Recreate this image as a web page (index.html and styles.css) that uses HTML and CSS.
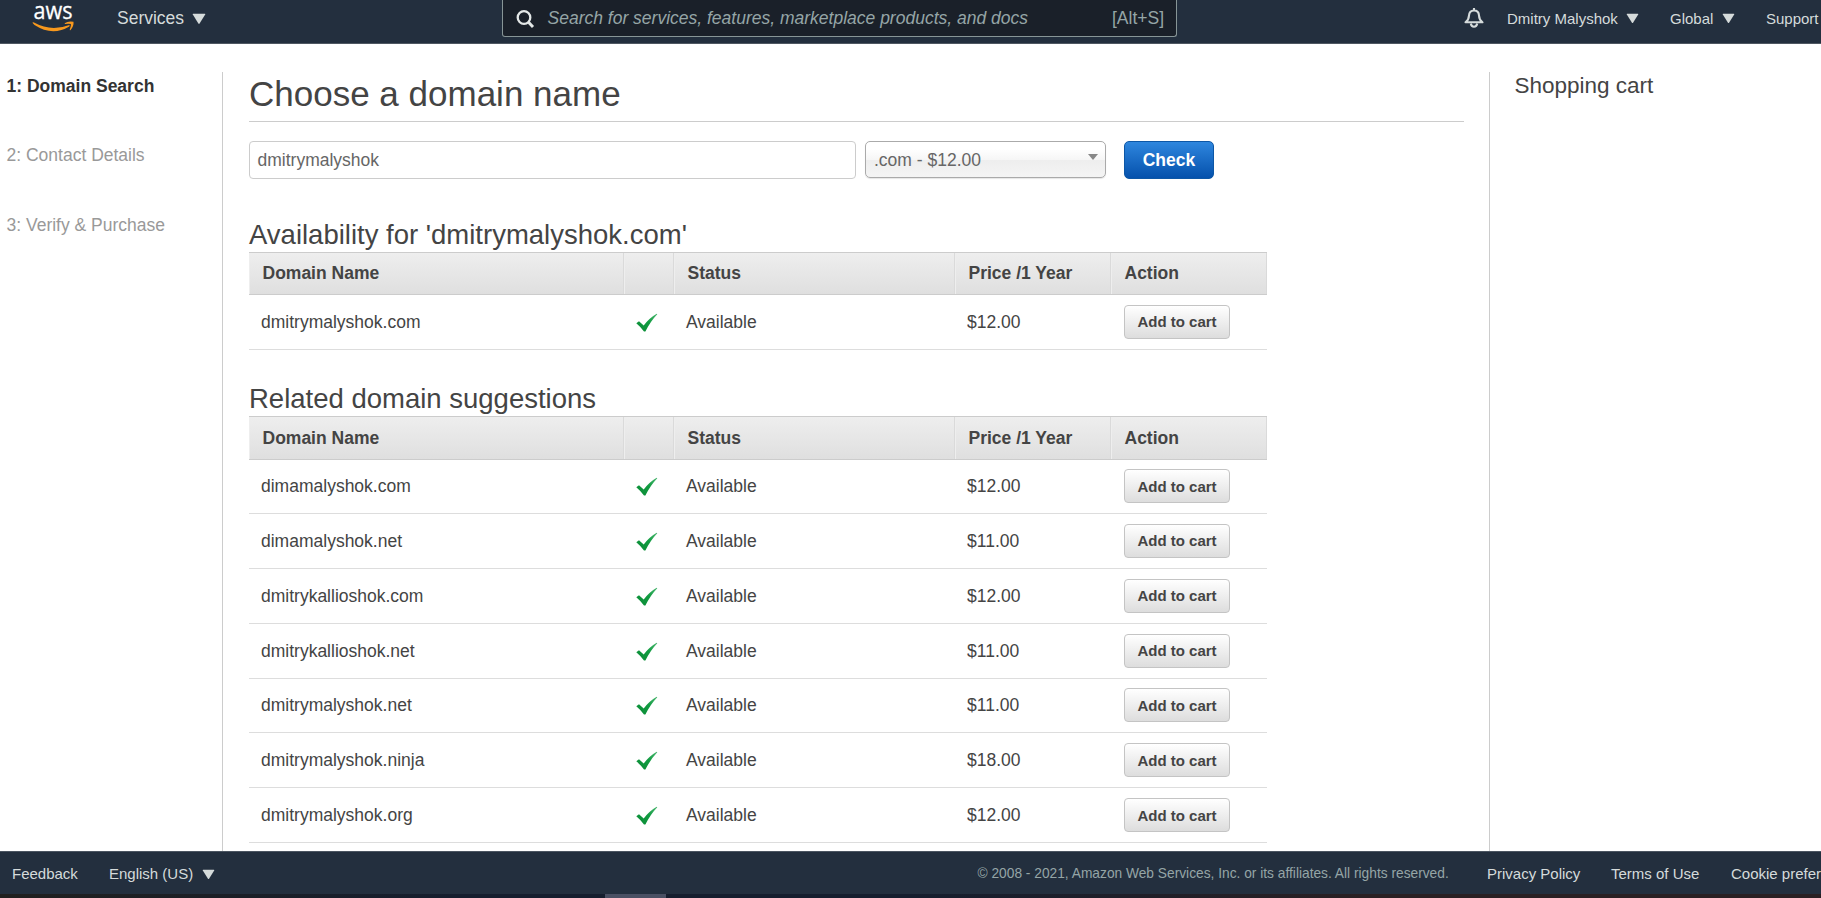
FILE: index.html
```html
<!DOCTYPE html>
<html lang="en">
<head>
<meta charset="utf-8">
<title>Choose a domain name</title>
<link rel="stylesheet" href="styles.css">
</head>
<body>
<svg class="defs" width="0" height="0">
  <defs>
    <linearGradient id="green" x1="0" y1="1" x2="1" y2="0"><stop offset="0" stop-color="#0c8a36"/><stop offset=".55" stop-color="#109b40"/><stop offset="1" stop-color="#4db872"/></linearGradient>
    <symbol id="check" viewBox="0 0 22 20"><path fill="url(#green)" d="M.3 10.300 3 8.300 7.700 12.400Q13.500 4.800 20.700.7L21.300 1.300Q14.500 8.300 9.400 18.600H8Q4.500 13.800.3 10.300Z"/></symbol>
    <symbol id="caret" viewBox="0 0 14 12"><path fill="#d5dbdb" d="M1.200.8H12.800Q13.600.8 13.200 1.600L7.600 10.500Q7 11.300 6.400 10.500L.8 1.600Q.4.8 1.200.8Z"/></symbol>
  </defs>
</svg>
<div class="page">
  <header class="topbar">
    <svg class="logo" width="44" height="38" viewBox="0 0 44 38">
      <text class="logo-text" x="1.500" y="19" textLength="39" lengthAdjust="spacingAndGlyphs">aws</text>
      <path fill="#f7981d" d="M.4 22.800Q1 21.800 2 22.600Q19 32 36.600 25.200Q38.300 24.700 37.300 26.400Q20.500 36.600 2.500 25Z"/>
      <path fill="#f7981d" d="M32.600 23.200Q36.500 20.600 41.500 21.800Q42 26 38.600 30Q37.500 30.800 37.800 29.500Q39.300 26 38.900 23.900Q36.500 23.400 33 24Z"/>
    </svg>
    <a class="services">Services <svg class="caret" width="14" height="12"><use href="#caret"/></svg></a>
    <div class="search">
      <svg width="19" height="20" viewBox="0 0 19 20" fill="none" stroke="#e4e8e8"><circle cx="8" cy="7.500" r="6.300" stroke-width="2.300"/><path d="M12.300 12 17 17" stroke-width="2.900"/></svg>
      <span class="placeholder">Search for services, features, marketplace products, and docs</span>
      <span class="shortcut">[Alt+S]</span>
    </div>
    <nav class="account">
      <svg class="bell" width="20" height="20" viewBox="0 0 20 20" fill="none" stroke="#d5dbdb" stroke-width="2.100" stroke-linejoin="round"><path d="M10 0V2M1.500 14.300Q4.800 12 5 7.500Q5.300 2.500 10 2.500T15 7.500Q15.200 12 18.500 14.300Z"/><path d="M6.800 15.500Q7.300 18.700 10 18.700T13.200 15.500"/></svg>
      <a class="user">Dmitry Malyshok <svg class="caret" width="13" height="11"><use href="#caret"/></svg></a>
      <a class="region">Global <svg class="caret" width="13" height="11"><use href="#caret"/></svg></a>
      <a>Support</a>
    </nav>
  </header>

  <div class="content">
    <aside class="steps">
      <div class="step current">1: Domain Search</div>
      <div class="step">2: Contact Details</div>
      <div class="step">3: Verify &amp; Purchase</div>
    </aside>
    <main class="main">
      <h1>Choose a domain name</h1>
      <div class="form">
        <div class="input">dmitrymalyshok</div>
        <div class="select"><span>.com - $12.00</span><i class="arrow"></i></div>
        <button class="primary">Check</button>
      </div>
      <h2>Availability for 'dmitrymalyshok.com'</h2>
      <div class="table">
        <div class="row head"><div>Domain Name</div><div></div><div>Status</div><div>Price /1 Year</div><div>Action</div></div>
        <div class="row"><div>dmitrymalyshok.com</div><div><svg class="ok"><use href="#check"/></svg></div><div>Available</div><div>$12.00</div><div><button class="add">Add to cart</button></div></div>
      </div>
      <h2 class="related">Related domain suggestions</h2>
      <div class="table">
        <div class="row head"><div>Domain Name</div><div></div><div>Status</div><div>Price /1 Year</div><div>Action</div></div>
        <div class="row"><div>dimamalyshok.com</div><div><svg class="ok"><use href="#check"/></svg></div><div>Available</div><div>$12.00</div><div><button class="add">Add to cart</button></div></div>
        <div class="row"><div>dimamalyshok.net</div><div><svg class="ok"><use href="#check"/></svg></div><div>Available</div><div>$11.00</div><div><button class="add">Add to cart</button></div></div>
        <div class="row"><div>dmitrykallioshok.com</div><div><svg class="ok"><use href="#check"/></svg></div><div>Available</div><div>$12.00</div><div><button class="add">Add to cart</button></div></div>
        <div class="row"><div>dmitrykallioshok.net</div><div><svg class="ok"><use href="#check"/></svg></div><div>Available</div><div>$11.00</div><div><button class="add">Add to cart</button></div></div>
        <div class="row"><div>dmitrymalyshok.net</div><div><svg class="ok"><use href="#check"/></svg></div><div>Available</div><div>$11.00</div><div><button class="add">Add to cart</button></div></div>
        <div class="row"><div>dmitrymalyshok.ninja</div><div><svg class="ok"><use href="#check"/></svg></div><div>Available</div><div>$18.00</div><div><button class="add">Add to cart</button></div></div>
        <div class="row"><div>dmitrymalyshok.org</div><div><svg class="ok"><use href="#check"/></svg></div><div>Available</div><div>$12.00</div><div><button class="add">Add to cart</button></div></div>
      </div>
    </main>
    <aside class="cart">Shopping cart</aside>
  </div>

  <footer class="footer">
    <a class="feedback">Feedback</a>
    <a class="language">English (US) <svg class="caret" width="13" height="11"><use href="#caret"/></svg></a>
    <span class="copyright">© 2008 - 2021, Amazon Web Services, Inc. or its affiliates. All rights reserved.</span>
    <a class="privacy">Privacy Policy</a>
    <a class="terms">Terms of Use</a>
    <a>Cookie preferences</a>
  </footer>
  <div class="taskbar"><div class="task"></div></div>
</div>
</body>
</html>
```
FILE: styles.css
```css
* { box-sizing: border-box; }
body { margin: 0; overflow: hidden; background: #fff; color: #444; font: 17.5px/20px "Liberation Sans", Arial, sans-serif; }
.defs { position: absolute; }
.page { width: 1821px; height: 898px; display: flex; flex-direction: column; overflow: hidden; }
button { font-family: inherit; margin: 0; padding: 0; }

.topbar { flex: 0 0 44px; display: flex; align-items: flex-start; background: #232f3e; border-bottom: 1px solid #4f5862; color: #d5dbdb; white-space: nowrap; }
.logo { flex: none; margin-left: 32px; overflow: visible; }
.logo-text { font-family: "Open Sans", "Noto Sans", sans-serif; font-size: 23.5px; line-height: 1; font-weight: 500; fill: #fff; stroke: #fff; stroke-width: .3px; }
.services { width: 385px; margin: 8px 0 0 41px; }
.services .caret { margin-left: 3px; }
.search { width: 675px; height: 37px; display: flex; align-items: flex-start; padding: 10px 12px 0 13px; background: #1a2029; border: 1px solid #879596; border-top: 0; border-radius: 0 0 3px 3px; color: #95a5a6; }
.placeholder { font-style: italic; margin: -2px auto 0 12.5px; }
.shortcut { margin-top: -2px; }
.account { display: flex; align-items: flex-start; margin-left: 287px; padding-top: 9px; font-size: 15px; }
.bell { flex: none; margin: -1px 23px 0 0; }
.user { width: 163px; }
.region { width: 96px; }
.account .caret { margin-left: 4px; }

.content { flex: 0 0 807px; display: flex; align-items: stretch; padding-top: 28px; overflow: hidden; }
.steps { flex: 0 0 223px; border-right: 1px solid #ccc; padding: 4px 0 0 6.5px; }
.step { height: 69.4px; color: #999; }
.step.current { color: #333; font-weight: bold; }
.main { flex: 0 0 1266px; padding: 0 25px 0 26px; }
h1, h2 { font-weight: normal; margin: 0; }
h1 { height: 50px; font-size: 35px; line-height: 44px; border-bottom: 1px solid #ccc; }
.form { display: flex; align-items: flex-start; margin-top: 19px; height: 73px; color: #666; }
.input { width: 607px; height: 38px; border: 1px solid #ccc; border-radius: 4px; padding: 9px 7.5px; line-height: 19px; }
.select { width: 241px; height: 37px; display: flex; justify-content: space-between; margin: 0 18px 0 9px; padding: 9px 7px 0 8px; line-height: 19px; border: 1px solid #aaa; border-radius: 5px; background: linear-gradient(#fff 20%, #f6f6f6 50%, #eee 52%, #f4f4f4 100%); box-shadow: 0 1px 1px rgba(0,0,0,.1); }
.arrow { width: 0; height: 0; margin-top: 3px; border: 5.500px solid transparent; border-top: 6px solid #888; border-bottom: 0; }
.primary { width: 90px; height: 38px; border: 1px solid #0d57a6; border-radius: 5px; background: linear-gradient(#2e86de, #0551ac); color: #fff; font-size: 17.5px; font-weight: bold; }
h2 { height: 39px; font-size: 27.5px; line-height: 44px; margin-top: -1px; }
h2.related { margin-top: 27px; }
.table { width: 1018px; }
.row { display: grid; grid-template-columns: 375px 50px 281px 156px 156px; height: 54.83px; align-items: center; border-bottom: 1px solid #ddd; }
.row > div { padding-left: 12px; }
.row > div:last-child { padding-left: 13px; }
.row.head { height: 43px; border: 1px solid #ccc; border-width: 1px 0; background: linear-gradient(#eee, #dfdfdf); font-weight: bold; align-items: stretch; line-height: 41px; }
.row.head > div { padding-left: 13.5px; border-right: 1px solid #dadada; box-shadow: inset 1px 0 #eee; }
.row.head > div:last-child { padding-left: 13.5px; }
.related + .table .head { height: 44px; line-height: 42px; margin-bottom: -.65px; }
.ok { display: block; width: 22px; height: 20px; margin: 2px 0 0 -.5px; }
.add { display: block; width: 106px; height: 34px; border: 1px solid #c4c4c4; border-radius: 4px; background: linear-gradient(#fff, #ddd); color: #444; font-size: 15px; font-weight: bold; }
.cart { flex: 1; border-left: 1px solid #ccc; padding: 1px 0 0 24.5px; font-size: 22.5px; line-height: 26px; white-space: nowrap; }

.footer { flex: 0 0 43px; display: flex; background: #232f3e; border-top: 1px solid #4b5561; color: #d5dbdb; font-size: 15px; line-height: 43px; white-space: nowrap; overflow: hidden; }
.footer > * { flex: none; }
.feedback { width: 97px; margin-left: 12px; }
.language { width: 868.5px; }
.language .caret { margin-left: 5px; vertical-align: -1px; }
.copyright { width: 509.5px; font-size: 13.75px; color: #95a5a6; }
.privacy { width: 124px; }
.terms { width: 120px; }
.taskbar { flex: 0 0 4px; background: linear-gradient(90deg, #21201f, #161e2e 25%, #161e2e 50%, #2a2023 75%, #2a2023); }
.task { width: 61px; height: 4px; margin-left: 605px; background: #4a5063; }
.services .caret { vertical-align: -1px; }
.account .caret { vertical-align: 0; }
```
